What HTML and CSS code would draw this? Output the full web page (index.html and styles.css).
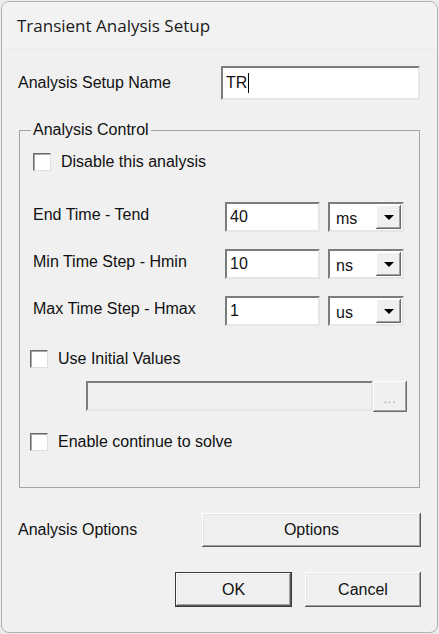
FILE: index.html
```html
<!DOCTYPE html>
<html>
<head>
<meta charset="utf-8">
<title>Transient Analysis Setup</title>
<link rel="stylesheet" href="styles.css">
</head>
<body>
<div class="window">
  <div class="titlebar">Transient Analysis Setup</div>
  <div class="content">
    <div class="name-row">
      <span class="label">Analysis Setup Name</span>
      <div class="field name-field">TR<span class="caret"></span></div>
    </div>

    <fieldset class="group">
      <legend>Analysis Control</legend>
      <div class="check check-first"><span class="box"></span><span>Disable this analysis</span></div>

      <div class="param-row param-first">
        <span class="param-label">End Time - Tend</span>
        <div class="field short">40</div>
        <div class="combo"><span class="combo-text">ms</span><span class="drop"><span class="tri"></span></span></div>
      </div>
      <div class="param-row">
        <span class="param-label">Min Time Step - Hmin</span>
        <div class="field short">10</div>
        <div class="combo"><span class="combo-text">ns</span><span class="drop"><span class="tri"></span></span></div>
      </div>
      <div class="param-row">
        <span class="param-label">Max Time Step - Hmax</span>
        <div class="field short">1</div>
        <div class="combo"><span class="combo-text">us</span><span class="drop"><span class="tri"></span></span></div>
      </div>

      <div class="check check-out check-init"><span class="box"></span><span>Use Initial Values</span></div>
      <div class="path-row">
        <div class="field path-field"></div>
        <div class="browse">...</div>
      </div>
      <div class="check check-out check-solve"><span class="box"></span><span>Enable continue to solve</span></div>
    </fieldset>

    <div class="options-row">
      <span class="label">Analysis Options</span>
      <div class="btn options-btn">Options</div>
    </div>
    <div class="button-row">
      <div class="btn default-btn">OK</div>
      <div class="btn cancel-btn">Cancel</div>
    </div>
  </div>
</div>
</body>
</html>
```

FILE: styles.css
```css
html, body {
  margin: 0;
  padding: 0;
  background: #ececec;
}
body {
  font-family: "Liberation Sans", Arial, sans-serif;
  font-size: 16px;
  color: #111;
}
.window {
  box-sizing: border-box;
  width: 437px;
  height: 632px;
  margin: 1px 0 0 1px;
  border: 1px solid #b0b0b0;
  border-radius: 8px;
  background: #f0f0f0;
  overflow: hidden;
  display: flex;
  flex-direction: column;
}
.titlebar {
  height: 46px;
  flex: none;
  display: flex;
  align-items: center;
  padding-left: 15px;
  font-family: "Open Sans", "Noto Sans", sans-serif;
  font-size: 17px;
  color: #1a1a1a;
  background: #f2f2f2;
  border-bottom: 1px solid #ebebeb;
}
.content {
  padding: 0 17px 0 16px;
}
.name-row {
  display: flex;
  justify-content: space-between;
  align-items: center;
  margin-top: 17px;
}
.field {
  box-sizing: border-box;
  background: #fff;
  border: 2px solid;
  border-color: #7c7c7c #e6e6e6 #e6e6e6 #7c7c7c;
  padding-left: 3px;
  display: flex;
  align-items: center;
}
.name-field {
  width: 199px;
  height: 34px;
}
.caret {
  display: inline-block;
  width: 1px;
  height: 20px;
  background: #000;
  margin-left: 1px;
}
.group {
  margin: 20px 0 0 1px;
  padding: 0 0 36px 13px;
  border: 1px solid #a3a3a3;
  min-width: 0;
}
.group legend {
  padding: 0 2px;
  margin-left: -2px;
  line-height: 20px;
}
.check {
  display: flex;
  align-items: center;
  gap: 10px;
  height: 18px;
}
.check-first {
  margin-top: 13px;
}
.check-out {
  margin-left: -3px;
}
.check-init {
  margin-top: 24px;
}
.check-solve {
  margin-top: 22px;
}
.box {
  box-sizing: border-box;
  width: 18px;
  height: 18px;
  background: #fff;
  border: 1px solid;
  border-color: #6a6a6a #dedede #dedede #6a6a6a;
  box-shadow: inset 1px 1px 0 #a8a8a8;
}
.param-row {
  display: flex;
  align-items: center;
  height: 30px;
  margin-top: 17px;
}
.param-first {
  margin-top: 31px;
}
.param-label {
  width: 192px;
  margin-top: -4px;
}
.short {
  width: 95px;
  height: 30px;
}
.combo {
  box-sizing: border-box;
  width: 76px;
  height: 30px;
  margin-left: 8px;
  background: #fff;
  border: 2px solid;
  border-color: #7c7c7c #e6e6e6 #e6e6e6 #7c7c7c;
  padding: 1px;
  display: flex;
  align-items: stretch;
}
.combo-text {
  flex: 1;
  padding-left: 5px;
  padding-top: 3px;
  display: flex;
  align-items: center;
}
.drop {
  box-sizing: border-box;
  width: 25px;
  background: #f0f0f0;
  box-shadow: inset -1px -1px 0 #6a6a6a, inset 1px 1px 0 #fff, inset -2px -2px 0 #a0a0a0;
  display: flex;
  align-items: center;
  justify-content: center;
}
.tri {
  width: 0;
  height: 0;
  border-left: 5px solid transparent;
  border-right: 5px solid transparent;
  border-top: 5px solid #000;
}
.path-row {
  display: flex;
  margin: 13px 0 0 53px;
  height: 30px;
}
.path-field {
  width: 287px;
  height: 30px;
  background: #f0f0f0;
}
.browse {
  box-sizing: border-box;
  width: 34px;
  height: 31px;
  background: #f0f0f0;
  box-shadow: inset -1px -1px 0 #6a6a6a, inset 1px 1px 0 #fff, inset -2px -2px 0 #a0a0a0;
  color: #a0a0a0;
  font-size: 12px;
  letter-spacing: 1px;
  display: flex;
  align-items: flex-end;
  justify-content: center;
  padding-bottom: 6px;
}
.btn {
  box-sizing: border-box;
  background: #f0f0f0;
  box-shadow: inset -1px -1px 0 #5a5a5a, inset 1px 1px 0 #fff, inset -2px -2px 0 #a0a0a0, inset 2px 2px 0 #e6e6e6;
  display: flex;
  align-items: center;
  justify-content: center;
}
.options-row {
  display: flex;
  justify-content: space-between;
  align-items: center;
  margin-top: 25px;
}
.options-btn {
  width: 219px;
  height: 34px;
  margin-right: -1px;
}
.button-row {
  display: flex;
  justify-content: flex-end;
  gap: 13px;
  margin-top: 25px;
  margin-right: -1px;
}
.default-btn {
  width: 117px;
  height: 35px;
  border: 1px solid #3a3a3a;
}
.cancel-btn {
  width: 116px;
  height: 35px;
}
```
